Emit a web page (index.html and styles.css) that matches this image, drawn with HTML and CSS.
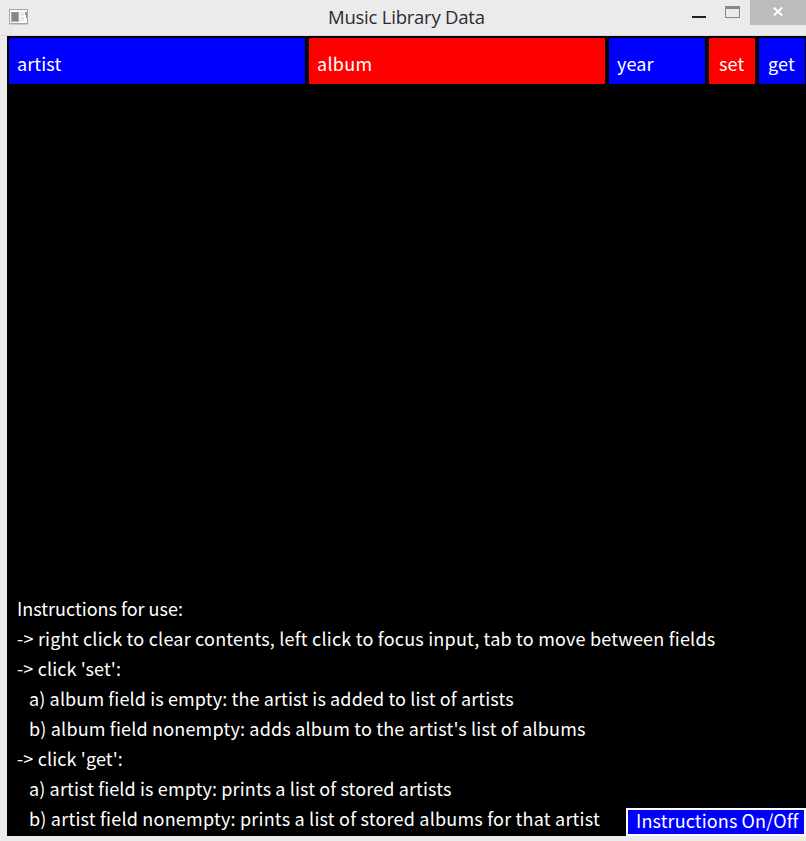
FILE: index.html
```html
<!DOCTYPE html>
<html lang="en">
<head>
<meta charset="utf-8">
<title>Music Library Data</title>
<link rel="stylesheet" href="styles.css">
</head>
<body>
<div class="window">
  <header class="titlebar">
    <svg class="app-icon" width="20" height="17" viewBox="0 0 20 17" shape-rendering="crispEdges">
      <path fill="#c9c9cb" d="M0 0h19v16H0z"/>
      <path fill="#a5a6aa" d="M0 0h19v1H0zM0 14h19v1H0zM0 1h1v14H0zM18 1h1v14h-1z"/>
      <path fill="#fafafa" d="M1 1h17v13H1z"/>
      <path fill="#a7adba" d="M2 3h8v10H2z"/>
      <path fill="#8296ca" d="M2 3h8v1H2z"/>
      <path fill="#778d85" d="M3 4h6v8H3z"/>
      <path fill="#e9e9e9" d="M11 3h4v4h-4zM11 8h4v4h-4z"/>
      <path fill="#8794a8" d="M16 3h2v6h-1V6h-1z"/>
    </svg>
    <h1 class="title">Music Library Data</h1>
    <div class="controls">
      <span class="minimize"></span>
      <span class="maximize"></span>
      <span class="close">
        <svg width="12" height="10" viewBox="0 0 12 10"><path d="M1.8 .6 10.2 8.6M10.2 .6 1.8 8.6" stroke="#fff" stroke-width="2.1" fill="none"/></svg>
      </span>
    </div>
  </header>
  <main class="canvas">
    <div class="fields">
      <div class="field blue">artist</div>
      <div class="field red wide">album</div>
      <div class="field blue">year</div>
      <div class="field red button">set</div>
      <div class="field blue button get">get</div>
    </div>
    <div class="bottom">
      <div class="instructions">
        <p>Instructions for use:</p>
        <p class="loose">-&gt; right click to clear contents, left click to focus input, tab to move between fields</p>
        <p class="snug">-&gt; click 'set':</p>
        <p class="sub snug">a) album field is empty: the artist is added to list of artists</p>
        <p class="sub medium">b) album field nonempty: adds album to the artist's list of albums</p>
        <p class="snug">-&gt; click 'get':</p>
        <p class="sub snug">a) artist field is empty: prints a list of stored artists</p>
        <p class="sub loose">b) artist field nonempty: prints a list of stored albums for that artist</p>
      </div>
      <div class="toggle">Instructions On/Off</div>
    </div>
  </main>
</div>
</body>
</html>
```
FILE: styles.css
```css
* { box-sizing: border-box; }
body { margin: 0; background: #ebebeb; overflow: hidden; }
.window { width: 806px; height: 841px; display: flex; flex-direction: column; }
.titlebar {
  height: 36px; display: grid; grid-template-columns: 328px 1fr 114px;
  align-items: start; flex: none;
  border-bottom: 1px solid #d9d9d9;
}
.app-icon { margin: 9px 0 0 9px; }
.title {
  margin: 0; padding-top: 4px; font: 400 18.5px/26px "Open Sans", sans-serif;
  color: #2b2a33; white-space: nowrap; letter-spacing: -0.23px;
}
.controls { display: flex; align-items: flex-start; }
.minimize { width: 14px; height: 2px; margin: 16px 19px 0 0; background: #222; }
.maximize { width: 15px; height: 12px; margin: 6px 10px 0 0; border: 1px solid #7f8c8a; border-top-width: 3px; }
.close { width: 56px; height: 25px; background: #bcbcbc; padding: 7px 0 0 22px; line-height: 0; }
.canvas {
  margin-left: 7px; height: 800px; background: #000; padding: 2px 0 0 2px;
  display: flex; flex-direction: column; justify-content: space-between;
  font: 400 18px/30px "Noto Sans CJK SC", "Noto Sans", sans-serif; color: #fff;
}
.fields { display: grid; grid-template-columns: 296px 296px 96px 46px 46px; gap: 4px; }
.field { height: 46px; padding: 10px 0 0 8px; letter-spacing: 0.1px; }
.wide { letter-spacing: 0.3px; }
.button { padding-left: 10px; letter-spacing: 0.2px; }
.get { padding-left: 9px; }
.blue { background: #00f; }
.red { background: #f00; }
.bottom { display: grid; grid-template-columns: 617px 180px; align-items: end; }
.instructions { padding: 0 0 3px 8px; }
.instructions p { margin: 0; height: 30px; white-space: nowrap; }
.instructions .sub { padding-left: 12px; }
.snug { letter-spacing: 0.125px; }
.medium { letter-spacing: 0.18px; }
.loose { letter-spacing: 0.208px; }
.toggle { height: 28px; border: 2px solid #fff; background: #00f; padding-left: 8px; line-height: 20px; letter-spacing: 0.12px; white-space: nowrap; }
```
